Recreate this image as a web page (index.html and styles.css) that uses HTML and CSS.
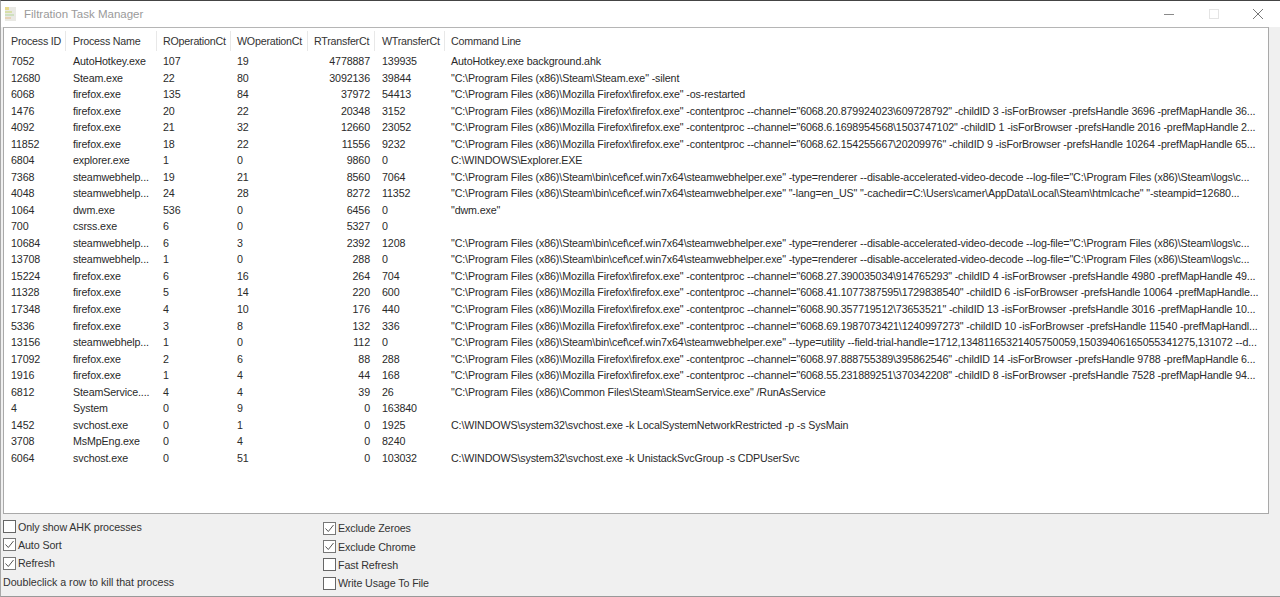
FILE: index.html
```html
<!DOCTYPE html>
<html lang="en">
<head>
<meta charset="utf-8">
<title>Filtration Task Manager</title>
<link rel="stylesheet" href="styles.css">
</head>
<body>
<div class="window">
  <header class="titlebar">
    <svg class="app-icon" width="14" height="16" viewBox="0 0 14 16"><rect x="1" y="1" width="11" height="14" fill="#e9e9e4"/><rect x="1" y="1" width="4" height="3" fill="#e8d98a"/><rect x="1" y="5" width="7" height="2" fill="#d8dfa8"/><rect x="1" y="8" width="9" height="2" fill="#cfe0c0"/><rect x="1" y="11" width="6" height="2" fill="#e6d3b8"/></svg>
    <span class="title">Filtration Task Manager</span>
    <div class="controls">
      <svg class="ctl" width="12" height="12" viewBox="0 0 12 12"><path d="M1 6.5H11" stroke="#8a8a8a" stroke-width="1"/></svg>
      <svg class="ctl" width="12" height="12" viewBox="0 0 12 12"><rect x="1.5" y="1.5" width="9" height="9" fill="none" stroke="#e4e4e4"/></svg>
      <svg class="ctl" width="12" height="12" viewBox="0 0 12 12"><path d="M1 1L11 11M11 1L1 11" stroke="#777" stroke-width="1"/></svg>
    </div>
  </header>
  <main class="list">
    <div class="row head"><span class="c1">Process ID</span><span class="c2">Process Name</span><span class="c3">ROperationCt</span><span class="c4">WOperationCt</span><span class="c5">RTransferCt</span><span class="c6">WTransferCt</span><span class="c7">Command Line</span></div>
    <div class="rows">
    <div class="row"><span class="c1">7052</span><span class="c2">AutoHotkey.exe</span><span class="c3">107</span><span class="c4">19</span><span class="c5">4778887</span><span class="c6">139935</span><span class="c7">AutoHotkey.exe background.ahk</span></div>
    <div class="row"><span class="c1">12680</span><span class="c2">Steam.exe</span><span class="c3">22</span><span class="c4">80</span><span class="c5">3092136</span><span class="c6">39844</span><span class="c7">"C:\Program Files (x86)\Steam\Steam.exe" -silent</span></div>
    <div class="row"><span class="c1">6068</span><span class="c2">firefox.exe</span><span class="c3">135</span><span class="c4">84</span><span class="c5">37972</span><span class="c6">54413</span><span class="c7">"C:\Program Files (x86)\Mozilla Firefox\firefox.exe" -os-restarted</span></div>
    <div class="row"><span class="c1">1476</span><span class="c2">firefox.exe</span><span class="c3">20</span><span class="c4">22</span><span class="c5">20348</span><span class="c6">3152</span><span class="c7">"C:\Program Files (x86)\Mozilla Firefox\firefox.exe" -contentproc --channel="6068.20.879924023\609728792" -childID 3 -isForBrowser -prefsHandle 3696 -prefMapHandle 36...</span></div>
    <div class="row"><span class="c1">4092</span><span class="c2">firefox.exe</span><span class="c3">21</span><span class="c4">32</span><span class="c5">12660</span><span class="c6">23052</span><span class="c7">"C:\Program Files (x86)\Mozilla Firefox\firefox.exe" -contentproc --channel="6068.6.1698954568\1503747102" -childID 1 -isForBrowser -prefsHandle 2016 -prefMapHandle 2...</span></div>
    <div class="row"><span class="c1">11852</span><span class="c2">firefox.exe</span><span class="c3">18</span><span class="c4">22</span><span class="c5">11556</span><span class="c6">9232</span><span class="c7">"C:\Program Files (x86)\Mozilla Firefox\firefox.exe" -contentproc --channel="6068.62.154255667\20209976" -childID 9 -isForBrowser -prefsHandle 10264 -prefMapHandle 65...</span></div>
    <div class="row"><span class="c1">6804</span><span class="c2">explorer.exe</span><span class="c3">1</span><span class="c4">0</span><span class="c5">9860</span><span class="c6">0</span><span class="c7">C:\WINDOWS\Explorer.EXE</span></div>
    <div class="row"><span class="c1">7368</span><span class="c2">steamwebhelp...</span><span class="c3">19</span><span class="c4">21</span><span class="c5">8560</span><span class="c6">7064</span><span class="c7">"C:\Program Files (x86)\Steam\bin\cef\cef.win7x64\steamwebhelper.exe" -type=renderer --disable-accelerated-video-decode --log-file="C:\Program Files (x86)\Steam\logs\c...</span></div>
    <div class="row"><span class="c1">4048</span><span class="c2">steamwebhelp...</span><span class="c3">24</span><span class="c4">28</span><span class="c5">8272</span><span class="c6">11352</span><span class="c7">"C:\Program Files (x86)\Steam\bin\cef\cef.win7x64\steamwebhelper.exe" "-lang=en_US" "-cachedir=C:\Users\camer\AppData\Local\Steam\htmlcache" "-steampid=12680...</span></div>
    <div class="row"><span class="c1">1064</span><span class="c2">dwm.exe</span><span class="c3">536</span><span class="c4">0</span><span class="c5">6456</span><span class="c6">0</span><span class="c7">"dwm.exe"</span></div>
    <div class="row"><span class="c1">700</span><span class="c2">csrss.exe</span><span class="c3">6</span><span class="c4">0</span><span class="c5">5327</span><span class="c6">0</span><span class="c7"></span></div>
    <div class="row"><span class="c1">10684</span><span class="c2">steamwebhelp...</span><span class="c3">6</span><span class="c4">3</span><span class="c5">2392</span><span class="c6">1208</span><span class="c7">"C:\Program Files (x86)\Steam\bin\cef\cef.win7x64\steamwebhelper.exe" -type=renderer --disable-accelerated-video-decode --log-file="C:\Program Files (x86)\Steam\logs\c...</span></div>
    <div class="row"><span class="c1">13708</span><span class="c2">steamwebhelp...</span><span class="c3">1</span><span class="c4">0</span><span class="c5">288</span><span class="c6">0</span><span class="c7">"C:\Program Files (x86)\Steam\bin\cef\cef.win7x64\steamwebhelper.exe" -type=renderer --disable-accelerated-video-decode --log-file="C:\Program Files (x86)\Steam\logs\c...</span></div>
    <div class="row"><span class="c1">15224</span><span class="c2">firefox.exe</span><span class="c3">6</span><span class="c4">16</span><span class="c5">264</span><span class="c6">704</span><span class="c7">"C:\Program Files (x86)\Mozilla Firefox\firefox.exe" -contentproc --channel="6068.27.390035034\914765293" -childID 4 -isForBrowser -prefsHandle 4980 -prefMapHandle 49...</span></div>
    <div class="row"><span class="c1">11328</span><span class="c2">firefox.exe</span><span class="c3">5</span><span class="c4">14</span><span class="c5">220</span><span class="c6">600</span><span class="c7">"C:\Program Files (x86)\Mozilla Firefox\firefox.exe" -contentproc --channel="6068.41.1077387595\1729838540" -childID 6 -isForBrowser -prefsHandle 10064 -prefMapHandle...</span></div>
    <div class="row"><span class="c1">17348</span><span class="c2">firefox.exe</span><span class="c3">4</span><span class="c4">10</span><span class="c5">176</span><span class="c6">440</span><span class="c7">"C:\Program Files (x86)\Mozilla Firefox\firefox.exe" -contentproc --channel="6068.90.357719512\73653521" -childID 13 -isForBrowser -prefsHandle 3016 -prefMapHandle 10...</span></div>
    <div class="row"><span class="c1">5336</span><span class="c2">firefox.exe</span><span class="c3">3</span><span class="c4">8</span><span class="c5">132</span><span class="c6">336</span><span class="c7">"C:\Program Files (x86)\Mozilla Firefox\firefox.exe" -contentproc --channel="6068.69.1987073421\1240997273" -childID 10 -isForBrowser -prefsHandle 11540 -prefMapHandl...</span></div>
    <div class="row"><span class="c1">13156</span><span class="c2">steamwebhelp...</span><span class="c3">1</span><span class="c4">0</span><span class="c5">112</span><span class="c6">0</span><span class="c7">"C:\Program Files (x86)\Steam\bin\cef\cef.win7x64\steamwebhelper.exe" --type=utility --field-trial-handle=1712,13481165321405750059,15039406165055341275,131072 --d...</span></div>
    <div class="row"><span class="c1">17092</span><span class="c2">firefox.exe</span><span class="c3">2</span><span class="c4">6</span><span class="c5">88</span><span class="c6">288</span><span class="c7">"C:\Program Files (x86)\Mozilla Firefox\firefox.exe" -contentproc --channel="6068.97.888755389\395862546" -childID 14 -isForBrowser -prefsHandle 9788 -prefMapHandle 6...</span></div>
    <div class="row"><span class="c1">1916</span><span class="c2">firefox.exe</span><span class="c3">1</span><span class="c4">4</span><span class="c5">44</span><span class="c6">168</span><span class="c7">"C:\Program Files (x86)\Mozilla Firefox\firefox.exe" -contentproc --channel="6068.55.231889251\370342208" -childID 8 -isForBrowser -prefsHandle 7528 -prefMapHandle 94...</span></div>
    <div class="row"><span class="c1">6812</span><span class="c2">SteamService....</span><span class="c3">4</span><span class="c4">4</span><span class="c5">39</span><span class="c6">26</span><span class="c7">"C:\Program Files (x86)\Common Files\Steam\SteamService.exe" /RunAsService</span></div>
    <div class="row"><span class="c1">4</span><span class="c2">System</span><span class="c3">0</span><span class="c4">9</span><span class="c5">0</span><span class="c6">163840</span><span class="c7"></span></div>
    <div class="row"><span class="c1">1452</span><span class="c2">svchost.exe</span><span class="c3">0</span><span class="c4">1</span><span class="c5">0</span><span class="c6">1925</span><span class="c7">C:\WINDOWS\system32\svchost.exe -k LocalSystemNetworkRestricted -p -s SysMain</span></div>
    <div class="row"><span class="c1">3708</span><span class="c2">MsMpEng.exe</span><span class="c3">0</span><span class="c4">4</span><span class="c5">0</span><span class="c6">8240</span><span class="c7"></span></div>
    <div class="row"><span class="c1">6064</span><span class="c2">svchost.exe</span><span class="c3">0</span><span class="c4">51</span><span class="c5">0</span><span class="c6">103032</span><span class="c7">C:\WINDOWS\system32\svchost.exe -k UnistackSvcGroup -s CDPUserSvc</span></div>
    </div>
  </main>
  <footer class="options">
    <div class="col col-left">
      <label class="opt"><span class="box"></span>Only show AHK processes</label>
      <label class="opt"><span class="box on"><svg width="11" height="11" viewBox="0 0 11 11"><path d="M1.5 5.5L4.3 8.5L9.5 2" fill="none" stroke="#555" stroke-width="1"/></svg></span>Auto Sort</label>
      <label class="opt"><span class="box on"><svg width="11" height="11" viewBox="0 0 11 11"><path d="M1.5 5.5L4.3 8.5L9.5 2" fill="none" stroke="#555" stroke-width="1"/></svg></span>Refresh</label>
      <div class="hint">Doubleclick a row to kill that process</div>
    </div>
    <div class="col col-right">
      <label class="opt"><span class="box on"><svg width="11" height="11" viewBox="0 0 11 11"><path d="M1.5 5.5L4.3 8.5L9.5 2" fill="none" stroke="#555" stroke-width="1"/></svg></span>Exclude Zeroes</label>
      <label class="opt"><span class="box on"><svg width="11" height="11" viewBox="0 0 11 11"><path d="M1.5 5.5L4.3 8.5L9.5 2" fill="none" stroke="#555" stroke-width="1"/></svg></span>Exclude Chrome</label>
      <label class="opt"><span class="box"></span>Fast Refresh</label>
      <label class="opt"><span class="box"></span>Write Usage To File</label>
    </div>
  </footer>
</div>
</body>
</html>
```
FILE: styles.css
```css
* { box-sizing: border-box; }
html, body { margin: 0; height: 100%; overflow: hidden; background: #f0f0f0; }
body { font-family: "Liberation Sans", Arial, sans-serif; font-size: 10.7px; letter-spacing: -0.13px; color: #2a2a2a; }
.window { width: 1280px; height: 597px; display: flex; flex-direction: column; background: #f0f0f0; border-top: 1px solid #444; border-left: 1px solid #a8a8a8; border-bottom: 1px solid #999; }
.titlebar { height: 26px; flex: none; background: #fff; display: flex; align-items: center; padding-left: 3px; }
.app-icon { flex: none; margin-right: 6px; }
.title { color: #9a9a9a; font-size: 11.5px; letter-spacing: 0; }
.controls { margin-left: auto; display: flex; align-items: center; gap: 32.5px; padding-right: 16px; }
.ctl { display: block; }
.list { flex: none; height: 487px; width: 1266px; margin-left: 2px; background: #fff; border: 1px solid #a9a9a9; border-top-color: #b5b5b5; padding-top: 1px; overflow: hidden; }
.row { display: grid; grid-template-columns: 62px 91px 74px 77px 67px 70px 1fr; height: 16.54px; line-height: 16.54px; white-space: nowrap; }
.row span { padding-left: 6px; overflow: hidden; }
.row .c1, .row .c2, .row .c6 { padding-left: 7px; }
.row .c5 { padding: 0 5px 0 0; text-align: right; }
.head { height: 24px; color: #333; letter-spacing: -0.22px; }
.head span { border-right: 1px solid #e8e8e8; height: 20px; line-height: 20px; margin-top: 2px; }
.head .c5 { text-align: left; padding: 0 0 0 6px; }
.head .c7 { border-right: 0; }
.options { flex: 1; display: flex; padding-left: 2px; color: #333; letter-spacing: -0.1px; }
.col { display: flex; flex-direction: column; }
.col-left { width: 320px; padding-top: 3.4px; }
.col-right { padding-top: 5px; }
.opt { height: 18.4px; display: flex; align-items: center; gap: 2px; white-space: nowrap; }
.box { width: 13px; height: 13px; background: #fff; border: 1px solid #666; display: flex; align-items: center; justify-content: center; flex: none; }
.box.on { border-color: #777; }
.hint { height: 18.4px; line-height: 18.4px; letter-spacing: -0.03px; }
```
